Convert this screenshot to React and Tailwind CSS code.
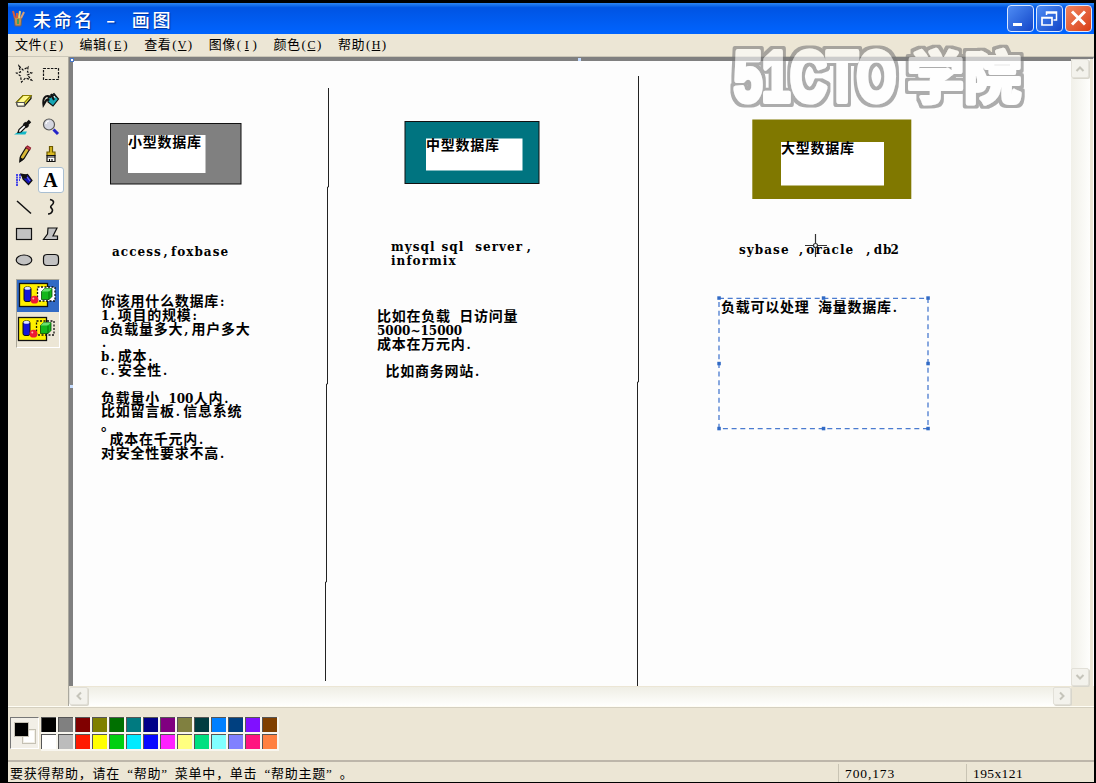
import React from "react";

const CELL = 8.42;

/* Splits mixed text into full-width and half-width runs so both keep a fixed pitch. */
function Mono({ children }) {
  const runs = children.match(/[\u3000-\u9fff]+|[.,:]|[0-9~]+|[A-Za-z]+| +/g) || [];
  return runs.map((r, i) => {
    if (/[\u3000-\u9fff]/.test(r)) return <span key={i} className="tracking-[0.75px]">{r}</span>;
    const letters = /[A-Za-z]/.test(r);
    const mark = /[.,:]/.test(r);
    return (
      <span
        key={i}
        className={"inline-block whitespace-pre font-['DejaVu_Serif','Noto_Sans_CJK_SC',serif] text-[12px] leading-[13.8px] " + (letters ? "tracking-[1.05px]" : mark ? "pl-px" : "")}
        style={{ width: r.length * CELL }}
      >
        {r}
      </span>
    );
  });
}

function Note({ pos, lines }) {
  return (
    <div className={"absolute whitespace-nowrap font-['Noto_Sans_CJK_SC',sans-serif] text-[14px] font-bold leading-[13.8px] text-black " + pos}>
      {lines.map((l, i) => (
        <div key={i} className="h-[13.8px]"><Mono>{l}</Mono></div>
      ))}
    </div>
  );
}

const Svg = ({ children }) => (
  <svg width="20" height="20" viewBox="0 0 20 20" fill="none" stroke="#111" strokeWidth="1.2">{children}</svg>
);

const tools = [
  <Svg><path d="M5 2l4 4 5-3-.5 5 4 1-4 2 4 5-6-2-4 4-1-6-4-3 4-1z" strokeDasharray="2.500 1.300" /></Svg>,
  <Svg><rect x="2.500" y="4.500" width="15" height="11" strokeDasharray="2.500 1.200" /></Svg>,
  <Svg><path d="M2.500 11.500L9 4.500h8v3L10.500 15h-7z" fill="#f3ea3c" /><path d="M2.500 11.500L9 4.500h8l-6.500 7z" fill="#fff98a" stroke="#8c8000" /><path d="M2.500 11.500h8V15h-7z" fill="#fffde0" stroke="#555" /></Svg>,
  <Svg><path d="M7 7l6-4.500L17.500 8 12 15 7 11z" fill="#16a6b4" /><path d="M8.500 7l5-3 2 2.500" fill="#d8f6f6" /><path d="M9 5.500C4 4 1.500 7 2.500 14l3-5 3-.5M10 3l3 6" strokeWidth="2" /></Svg>,
  <Svg><path d="M2 17h9l1-2H5z" fill="#15b8c8" stroke="#15b8c8" /><path d="M4 15.500l1-3 6-5.500 2 2-6 6z" fill="#fff" /><path d="M10 6l4 4M12.500 7.500L16 4" strokeWidth="3.500" /></Svg>,
  <Svg><path d="M12.500 12.500L17 17" stroke="#2424c8" strokeWidth="3" /><circle cx="8" cy="7.500" r="5.500" fill="#d4d6e0" stroke="#555" /><path d="M5 7a3 3 0 013-3" stroke="#fff" /></Svg>,
  <Svg><path d="M6 17.500l.5-5L12 3.500l3.500 2L10 14.500z" fill="#d8b838" /><path d="M12 3.500L13.500 2 16.500 4l-1 2z" fill="#e05060" stroke="#902030" /><path d="M6 17.500l.3-3.500 2.500 1.500z" fill="#111" /></Svg>,
  <Svg><path d="M8.500 2.500h3V8h2.500v3.500H6V8h2.500z" fill="#d8b820" stroke="#6b5900" /><path d="M6 11.500h8v6H6z" fill="#fff" /><path d="M6 13h8M8.500 17v-2M11 17v-2" /></Svg>,
  <Svg><path d="M2 5h7M2 7.500h6M2 10h4M2 12.500h3M2 15h2" stroke="#4747e6" strokeDasharray="2 1" strokeWidth="1.800" /><path d="M8.500 6l5-1.500 4.500 6-3.500 4L9 9z" fill="#1414b8" /><path d="M7 4l5 1 1 3-4 0z" fill="#111" /><path d="M13 7l3 4" stroke="#7474f4" /></Svg>,
  <span className="font-['Liberation_Serif',serif] text-[20px] font-bold leading-none text-black">A</span>,
  <Svg><path d="M3 4l14 12.500" strokeWidth="1.500" /></Svg>,
  <Svg><path d="M9 2.500c5 1 4 4 1.500 6s1.500 3 1 5-2.500 3.500-4.500 3.500" strokeWidth="1.600" /></Svg>,
  <Svg><rect x="2.500" y="4.500" width="15" height="11" fill="#c2c2c2" /></Svg>,
  <Svg><path d="M7 4h9l-4 8h4.500v3.500h-14L6.500 10z" fill="#c2c2c2" /></Svg>,
  <Svg><ellipse cx="10" cy="10" rx="7.800" ry="5" fill="#c2c2c2" /></Svg>,
  <Svg><rect x="2.500" y="4.500" width="15" height="11" rx="3.500" fill="#c2c2c2" /></Svg>,
];

function SelectionMode({ opaque }) {
  return (
    <svg width="42" height="31" viewBox="0 0 42 31">
      <rect x="2.500" y="3.500" width="28" height="23" fill="#fff000" stroke="#111" strokeWidth="1.300" />
      <path d="M20.500 7h17.500v14H20.500z" fill={opaque ? "#fff" : "none"} stroke="#111" strokeWidth="1.300" strokeDasharray="2 1.500" />
      <rect x="7" y="7" width="7" height="14.500" rx="2" fill="#1616d8" stroke="#111" />
      <ellipse cx="10.500" cy="8.300" rx="3" ry="1.500" fill="#dfe6ff" />
      <circle cx="17.500" cy="19.700" r="3.900" fill="#ee1a32" />
      <circle cx="16.300" cy="18.500" r="1" fill="#ffb0b0" />
      <path d="M24.500 11.500l3-3H35v8l-3 3h-7.500z" fill="#12b71a" stroke="#064c08" strokeWidth=".8" />
      <path d="M24.500 11.500l3-3H35l-3 3z" fill="#6be070" />
      <path d="M32 11.500v8" fill="none" stroke="#066008" strokeWidth=".8" />
    </svg>
  );
}

const topColors = ["bg-[#000000]", "bg-[#808080]", "bg-[#800000]", "bg-[#808000]", "bg-[#007000]", "bg-[#007a80]", "bg-[#000088]", "bg-[#800080]", "bg-[#808040]", "bg-[#003c40]", "bg-[#0080ff]", "bg-[#004080]", "bg-[#8010ff]", "bg-[#804000]"];
const bottomColors = ["bg-[#ffffff]", "bg-[#bcbcbc]", "bg-[#ff1a00]", "bg-[#ffff00]", "bg-[#00d010]", "bg-[#00eaff]", "bg-[#0808ff]", "bg-[#ff20ff]", "bg-[#ffff80]", "bg-[#00e080]", "bg-[#80ffff]", "bg-[#8080ff]", "bg-[#ff1480]", "bg-[#ff8040]"];

const menus = [["文件", "F"], ["编辑", "E"], ["查看", "V"], ["图像", "I"], ["颜色", "C"], ["帮助", "H"]];

function ScrollButton({ d, size }) {
  return (
    <div className={"flex shrink-0 items-center justify-center rounded-[2px] border border-[#e2e0d8] bg-[#f3f2ec] shadow-[1px_1px_0_#d8d6cc] " + size}>
      <svg width="10" height="10" viewBox="0 0 10 10" fill="none" stroke="#c5c4ba" strokeWidth="2"><path d={d} /></svg>
    </div>
  );
}

function WinButton({ children, tone }) {
  return (
    <div className={"flex h-[27px] w-[27px] items-center justify-center rounded-[4px] border border-[#dbe8ff] bg-linear-to-br " + tone}>
      <svg width="25" height="25" viewBox="0 0 25 25" fill="none" stroke="#fff">{children}</svg>
    </div>
  );
}

function Watermark() {
  return (
    <svg className="pointer-events-none absolute left-[714px] top-[21px] opacity-60" width="330" height="110">
      <defs>
        <filter id="ring" x="-10%" y="-20%" width="120%" height="140%">
          <feMorphology in="SourceAlpha" operator="dilate" radius="3" result="fat" />
          <feGaussianBlur in="fat" stdDeviation="0.7" result="soft" />
          <feFlood floodColor="#787878" />
          <feComposite in2="soft" operator="in" result="edge" />
          <feMerge>
            <feMergeNode in="edge" />
            <feMergeNode in="SourceGraphic" />
          </feMerge>
        </filter>
      </defs>
      <g filter="url(#ring)" stroke="#fff" fill="#fff" strokeLinejoin="round" fontWeight="bold">
        <text x="20" y="80" fontSize="71" strokeWidth="6" textLength="162" lengthAdjust="spacingAndGlyphs" fontFamily="Liberation Sans Narrow, Liberation Sans, sans-serif">51CTO</text>
        <text x="193" y="77" fontSize="56" strokeWidth="4" textLength="114" lengthAdjust="spacingAndGlyphs" fontFamily="Noto Sans CJK SC, sans-serif">学院</text>
      </g>
    </svg>
  );
}

function Drawing() {
  const handles = [[719, 298], [823.5, 298], [928, 298], [719, 363.5], [928, 363.5], [719, 428.5], [823.5, 428.5], [928, 428.5]];
  return (
    <div className="relative min-w-0 flex-1 overflow-hidden bg-[#fdfdfd]">
      <svg className="absolute left-0 top-0" width="998" height="625" viewBox="73 61 998 625" fill="none">
        <path d="M328.500 88V187H327.500V384H326.500V582H325.500V681" stroke="#222" />
        <path d="M638.500 76V382H637.500V686" stroke="#222" />
        <rect x="110.500" y="123.500" width="130.500" height="60.500" fill="#808080" stroke="#111" />
        <rect x="128" y="135" width="77.500" height="38" fill="#fff" />
        <rect x="405" y="121.500" width="134" height="62" fill="#007480" stroke="#111" />
        <rect x="426" y="138.500" width="96.500" height="32" fill="#fff" />
        <rect x="752.300" y="119.500" width="159" height="79.500" fill="#807800" />
        <rect x="781" y="142" width="103" height="43.500" fill="#fff" />
        <rect x="719" y="298.300" width="209" height="130.300" stroke="#4a7bd0" strokeWidth="1.300" strokeDasharray="5 3.700" />
        {handles.map(([x, y], i) => <rect key={i} x={x - 1.7} y={y - 1.7} width="3.500" height="3.500" fill="#316ac5" />)}
      </svg>
      <Note pos="left-[55px] top-[74px]" lines={["小型数据库"]} />
      <Note pos="left-[353px] top-[77px]" lines={["中型数据库"]} />
      <Note pos="left-[708px] top-[80px]" lines={["大型数据库"]} />
      <Note pos="left-[39px] top-[183px]" lines={["access,foxbase"]} />
      <Note pos="left-[318px] top-[178px]" lines={["mysql sql server,", "informix"]} />
      <Note pos="left-[666px] top-[181px]" lines={["sybase ,oracle ,db2"]} />
      <Note pos="left-[28px] top-[233px]" lines={["你该用什么数据库:", "1.项目的规模:", "a负载量多大,用户多大", ".", "b.成本.", "c.安全性.", "", "负载量小 100人内.", "比如留言板.信息系统", "。", " 成本在千元内.", "对安全性要求不高."]} />
      <Note pos="left-[304px] top-[248px]" lines={["比如在负载 日访问量", "5000~15000", "成本在万元内.", "", " 比如商务网站."]} />
      <Note pos="left-[648px] top-[239px]" lines={["负载可以处理 海量数据库."]} />
      <svg className="absolute left-[731px] top-[172px]" width="24" height="26" fill="none" stroke="#333" strokeWidth="1.200">
        <path d="M11.500 1v9M11.500 15v9M1 12.500h8M14 12.500h9" /><circle cx="11.500" cy="12.500" r="2" />
      </svg>
    </div>
  );
}

export default function App() {
  return (
    <div className="relative h-[783px] w-[1096px] overflow-hidden bg-black pb-px pl-2 pr-[2px] pt-[3px] font-['Liberation_Serif','Noto_Sans_CJK_SC',serif] text-black">
      <div className="flex h-full flex-col bg-[#ece6d5]">
        <header className="flex h-[31px] shrink-0 items-center bg-linear-to-b from-[#2c86f4] from-0% via-[#0054e3] via-15% to-[#0064ff] pl-[3px] pr-[2px]">
          <svg width="15" height="19" viewBox="0 0 15 19" fill="none">
            <path d="M3 8h8l-1 9H4z" fill="#c78d4c" stroke="#5e6070" />
            <path d="M4 9L2 2M6 9V4" stroke="#d45b3a" strokeWidth="2" /><path d="M8 9l1-7" stroke="#e8d36c" strokeWidth="2" /><path d="M10 9l3-6" stroke="#d8a07a" strokeWidth="2" />
            <path d="M7 10v5" stroke="#3ca060" strokeWidth="2" />
          </svg>
          <h1 className="ml-[7px] flex-1 whitespace-pre font-['Noto_Sans_CJK_SC',sans-serif] text-[18px] font-medium leading-[30px] tracking-[2.6px] text-white [text-shadow:1px_1px_1px_#00309a]">
            未命名<span className="ml-[11px] mr-[14px] inline-block w-[12px] origin-left scale-x-150">-</span>画图
          </h1>
          <div className="flex gap-[2px]">
            <WinButton tone="from-[#4f8cf4] to-[#1444c8]"><path d="M5 18.500h9" strokeWidth="3" /></WinButton>
            <WinButton tone="from-[#4f8cf4] to-[#1444c8]"><path d="M9.500 9V6h10v8h-3M9.500 7h10" strokeWidth="1.500" /><path d="M5 11.500h10V19H5zM5 12h10" strokeWidth="1.700" /></WinButton>
            <WinButton tone="from-[#f0835c] to-[#d83c10]"><path d="M6 5.500l13 13M19 5.500l-13 13" strokeWidth="3" /></WinButton>
          </div>
        </header>

        <nav className="flex h-[23px] shrink-0 items-center gap-[17px] border-b border-[#cbc7b8] pl-[7px]">
          {menus.map(([name, key]) => (
            <div key={key} className="w-[47.6px] whitespace-nowrap text-[13px] leading-[22px] tracking-[0.5px]">
              {name}<span className="inline-flex w-[21px] items-baseline justify-between pl-px tracking-normal">(<u className="text-[12px]">{key}</u>)</span>
            </div>
          ))}
        </nav>

        <div className="flex h-[650px] shrink-0 border-b border-[#fffdf4]">
          <aside className="w-[60px] shrink-0 pl-[3px] pt-[4px]">
            <div className="grid grid-cols-[26px_26px] gap-x-[0.5px] gap-y-[0.6px]">
              {tools.map((t, i) => (
                <div key={i} className={"flex h-[26px] w-[26px] items-center justify-center rounded-[3px] " + (i === 9 ? "border border-[#a9bfd2] bg-white" : "")}>{t}</div>
              ))}
            </div>
            <div className="ml-[5px] mt-[6px] h-[69px] w-[44px] border border-b-white border-l-[#aaa698] border-r-white border-t-[#aaa698]">
              <div className="h-[32px] bg-[#316ac5]"><SelectionMode opaque /></div>
              <div className="-ml-px h-[32px] pt-[2px]"><SelectionMode /></div>
            </div>
          </aside>
          <div className="flex min-w-0 flex-1 flex-col border-l border-[#aaa89e]">
            <div className="flex h-[629px] shrink-0">
              <div className="relative flex min-w-0 flex-1 border-l-4 border-t-4 border-[#808080]">
                <Drawing />
                <i className="absolute -left-[3px] -top-[3px] h-[4px] w-[4px] border border-[#4a78c8] bg-white" />
                <i className="absolute -top-[3px] left-[505px] h-[3px] w-[3px] bg-[#c5dcff]" />
                <i className="absolute -left-[3px] top-[324px] h-[3px] w-[3px] bg-[#c5dcff]" />
              </div>
              <div className="flex w-[19px] flex-col justify-between border-t-2 border-[#808080] bg-linear-to-r from-[#f1f0e9] to-[#fefefc]">
                <ScrollButton d="M1.500 7L5 3.500 8.500 7" size="h-[19px] w-[18px]" />
                <ScrollButton d="M1.500 3L5 6.500 8.500 3" size="h-[18px] w-[18px]" />
              </div>
              <div className="w-[4px] border-r border-white border-t-2 border-t-[#808080]" />
            </div>
            <div className="flex h-[20px] items-center">
              <div className="flex h-[19px] w-[1002px] items-center justify-between bg-linear-to-b from-[#efeee5] to-[#fffffd]">
                <ScrollButton d="M7 1.500L3.500 5 7 8.500" size="h-[18px] w-[19px]" />
                <ScrollButton d="M3 1.500L6.500 5 3 8.500" size="h-[18px] w-[18px]" />
              </div>
            </div>
          </div>
        </div>

        <div className="flex h-[53px] shrink-0 gap-[3px] border-t border-[#d5d0c0] pl-[2px] pt-[9px]">
          <div className="h-[32px] w-[29px] border border-b-white border-l-[#777] border-r-white border-t-[#777] bg-[#f2efe7] pl-[3px] pt-[4px]">
            <div className="relative h-[22px] w-[22px]">
              <div className="absolute bottom-0 right-0 h-[15px] w-[14px] border border-[#c5c1b4] bg-[#f2efe7] p-px"><div className="h-full bg-white" /></div>
              <div className="absolute left-0 top-0 h-[15px] w-[15px] border border-[#c5c1b4] bg-black" />
            </div>
          </div>
          <div className="-ml-px grid h-[34px] grid-cols-[repeat(14,17px)] grid-rows-[17px_17px]">
            {[...topColors, ...bottomColors].map((c, i) => (
              <div key={i} className="h-[17px] w-[17px] border-b-2 border-r-2 border-[#f8f6ef]">
                <div className={"h-[15px] w-[15px] border-l-[1.5px] border-t-[1.5px] border-[#555] " + c} />
              </div>
            ))}
          </div>
        </div>

        <footer className="flex min-h-0 flex-1 border-t-2 border-[#bdb6aa] pt-[2px] text-[13px] leading-[19px]">
          <div className="flex-1 whitespace-nowrap pl-[2px] tracking-[0.75px]">
            要获得帮助<span className="inline-block w-[13.7px]">，</span>请在<span className="inline-block w-[13.7px] text-right">“</span>帮助<span className="inline-block w-[13.7px]">”</span>菜单中<span className="inline-block w-[13.7px]">，</span>单击<span className="inline-block w-[13.7px] text-right">“</span>帮助主题<span className="inline-block w-[13.7px]">”</span>。
          </div>
          <div className="w-[128px] border-l border-[#c9c4b4] pl-[6px] text-[13.5px] tracking-[0.9px]">700,173</div>
          <div className="w-[128px] border-l border-[#c9c4b4] pl-[6px] text-[13.5px] tracking-[0.4px]">195x121</div>
        </footer>
      </div>
      <Watermark />
    </div>
  );
}
